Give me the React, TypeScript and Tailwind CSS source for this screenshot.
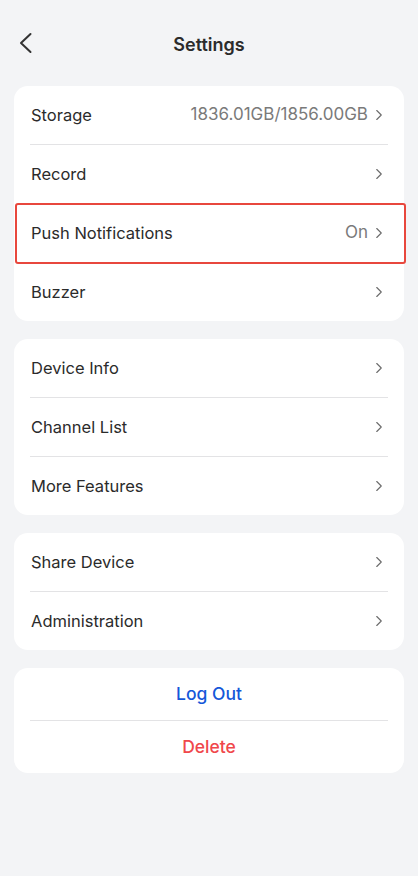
import { ChevronRight } from 'lucide-react';

type Row = { label: string; value?: string; highlight?: boolean };

const groups: Row[][] = [
  [
    { label: 'Storage', value: '1836.01GB/1856.00GB' },
    { label: 'Record' },
    { label: 'Push Notifications', value: 'On', highlight: true },
    { label: 'Buzzer' },
  ],
  [{ label: 'Device Info' }, { label: 'Channel List' }, { label: 'More Features' }],
  [{ label: 'Share Device' }, { label: 'Administration' }],
];

function SettingRow({ row, last }: { row: Row; last: boolean }) {
  return (
    <div className="relative">
      <div className="flex h-[58px] items-center justify-between pl-[17px] pr-[16px]">
        <span className="text-[16.5px] text-[#2b2b2b]">{row.label}</span>
        <div className="flex items-center gap-[2px]">
          {row.value && <span className="text-[17px] text-[#7a7a7a]">{row.value}</span>}
          <ChevronRight className="h-[18px] w-[18px] text-[#6b6b6b]" strokeWidth={1.5} />
        </div>
      </div>
      {!last && <div className="mx-4 h-px bg-[#e3e3e5]" />}
      {row.highlight && (
        <div className="absolute left-[1px] -right-[2px] -top-[1px] bottom-[-1px] rounded-[3px] border-2 border-[#e8473d]" />
      )}
    </div>
  );
}

export default function App() {
  return (
    <div
      className="min-h-[876px] w-[418px] bg-[#f3f4f6] px-[14px]"
      style={{ fontFamily: 'Inter, "Noto Sans", sans-serif' }}
    >
      <div className="relative flex h-[86px] items-center justify-center pt-[3px]">
        <svg
          className="absolute left-[4px] top-[32px]"
          width="14"
          height="22"
          viewBox="0 0 14 22"
          fill="none"
          stroke="#333"
          strokeWidth="2"
          strokeLinecap="round"
          strokeLinejoin="round"
        >
          <path d="M12.5 2 L3 11 L12.5 20" />
        </svg>
        <h1 className="text-[18px] font-semibold text-[#2b2b2b]">Settings</h1>
      </div>
      <div className="flex flex-col gap-[18px]">
        {groups.map((g, gi) => (
          <div key={gi} className="rounded-[14px] bg-white">
            {g.map((r, i) => (
              <SettingRow key={r.label} row={r} last={i === g.length - 1} />
            ))}
          </div>
        ))}
        <div className="rounded-[14px] bg-white">
          <div className="flex h-[52px] items-center justify-center text-[17.5px] font-medium text-[#1457d9]">
            Log Out
          </div>
          <div className="mx-4 h-px bg-[#e3e3e5]" />
          <div className="flex h-[52px] items-center justify-center text-[17.5px] font-medium text-[#f0474b]">
            Delete
          </div>
        </div>
      </div>
    </div>
  );
}
